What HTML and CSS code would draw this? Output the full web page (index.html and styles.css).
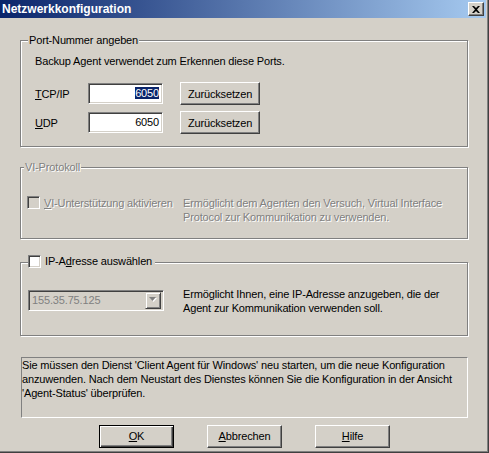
FILE: index.html
```html
<!DOCTYPE html>
<html lang="de">
  <head>
    <meta charset="UTF-8" />
    <title>Netzwerkkonfiguration</title>
    <link rel="stylesheet" href="styles.css">
  </head>
  <body>
    <div class="window">
      <div class="frame">
        <div class="titlebar">
          <span class="title">Netzwerkkonfiguration</span>
          <span class="close">
            <svg width="8" height="7" viewBox="0 0 8 7">
              <path d="M0 0h2l2 2 2-2h2L5 3.5 8 7H6L4 5 2 7H0l3-3.5z" fill="#000" />
            </svg>
          </span>
        </div>

        <div class="body">
          <!-- Ports -->
          <fieldset class="group group-ports">
            <legend>Port-Nummer angeben</legend>
            <div class="group-body">
              <p class="intro">Backup Agent verwendet zum Erkennen diese Ports.</p>
              <div class="port-row">
                <span class="port-label"><u>T</u>CP/IP</span>
                <div class="field"><span class="sel">6050</span></div>
                <button class="btn btn-reset">Zurücksetzen</button>
              </div>
              <div class="port-row port-row-2">
                <span class="port-label"><u>U</u>DP</span>
                <div class="field">6050</div>
                <button class="btn btn-reset">Zurücksetzen</button>
              </div>
            </div>
          </fieldset>

          <!-- VI -->
          <fieldset class="group group-vi">
            <legend class="disabled">VI-Protokoll</legend>
            <div class="group-body opt-row">
              <span class="check check-disabled"></span>
              <span class="opt-label disabled"><u>V</u>I-Unterstützung aktivieren</span>
              <span class="desc disabled">Ermöglicht dem Agenten den Versuch, Virtual Interface<br>Protocol zur Kommunikation zu verwenden.</span>
            </div>
          </fieldset>

          <!-- IP -->
          <fieldset class="group group-ip">
            <legend>
              <span class="legend-check">
                <span class="check"></span>
                <span class="legend-text">IP-A<u>d</u>resse auswählen</span>
              </span>
            </legend>
            <div class="group-body ip-row">
              <div class="combo">
                <span class="combo-value">155.35.75.125</span>
                <span class="combo-arrow">
                  <svg width="8" height="6" viewBox="0 0 8 6">
                    <path d="M1 1h7L4.5 5z" fill="#fff" />
                    <path d="M0 0h7L3.5 4z" fill="#808080" />
                  </svg>
                </span>
              </div>
              <span class="desc ip-desc">Ermöglicht Ihnen, eine IP-Adresse anzugeben, die der<br>Agent zur Kommunikation verwenden soll.</span>
            </div>
          </fieldset>

          <div class="info">Sie müssen den Dienst 'Client Agent für Windows' neu starten, um die neue Konfiguration<br>anzuwenden. Nach dem Neustart des Dienstes können Sie die Konfiguration in der Ansicht<br>'Agent-Status' überprüfen.</div>

          <div class="actions">
            <button class="btn btn-action btn-default"><u>O</u>K</button>
            <button class="btn btn-action"><u>A</u>bbrechen</button>
            <button class="btn btn-action"><u>H</u>ilfe</button>
          </div>
        </div>
      </div>
    </div>
  </body>
</html>
```

FILE: styles.css
```css
* {
  margin: 0;
  padding: 0;
  box-sizing: border-box;
}
body {
  font-family: "Liberation Sans", Arial, sans-serif;
  font-size: 11px;
  line-height: 14px;
  letter-spacing: -0.15px;
  color: #000;
  background: #d4d0c8;
}
.window {
  width: 489px;
  height: 453px;
  background: #d4d0c8;
  border-right: 1px solid #404040;
  border-bottom: 1px solid #404040;
}
.frame {
  height: 100%;
  border-right: 1px solid #808080;
  border-bottom: 1px solid #808080;
  padding-right: 1px;
  padding-bottom: 1px;
}
.titlebar {
  height: 18px;
  display: flex;
  align-items: center;
  justify-content: space-between;
  padding: 0 2px;
  background: linear-gradient(to right, #0a246a, #a6caf0);
}
.title {
  color: #fff;
  font-weight: bold;
  font-size: 12px;
  letter-spacing: 0;
  line-height: 18px;
}
.close {
  width: 16px;
  height: 14px;
  display: flex;
  align-items: center;
  justify-content: center;
  background: #d4d0c8;
  border: 1px solid;
  border-color: #fff #404040 #404040 #fff;
  box-shadow: inset -1px -1px #808080;
}
.body {
  padding: 0 18px 0 20px;
}
.disabled {
  color: #808080;
  text-shadow: 1px 1px 0 #fff;
}

/* group boxes */
.group {
  margin: 0;
  padding: 0;
  min-width: 0;
  border: 1px solid #808080;
  box-shadow: inset 1px 1px 0 #fff, 1px 1px 0 #fff;
}
.group legend {
  background: #d4d0c8;
  line-height: 14px;
  margin-left: 7px;
  padding: 0 1px;
}
.group-ports {
  margin-top: 15px;
}
.group-ports .group-body {
  padding: 7px 0 12px 14px;
}
.group-vi {
  margin-top: 13px;
}
.group-vi legend {
  margin-left: 3px;
}
.group-vi .group-body {
  padding: 22px 0 14px 6px;
}
.group-ip {
  margin-top: 15px;
}
.group-ip legend {
  padding: 0 3px 0 0;
}
.group-ip .group-body {
  padding: 16px 0 20px 7px;
}
.legend-check {
  display: inline-flex;
  align-items: center;
}
.legend-text {
  margin-left: 4px;
}

/* ports */
.intro {
  white-space: nowrap;
}
.port-row {
  display: flex;
  align-items: center;
  margin-top: 14px;
  height: 23px;
}
.port-row-2 {
  margin-top: 6px;
}
.port-label {
  width: 53px;
}
.field {
  width: 75px;
  height: 21px;
  background: #fff;
  border: 1px solid;
  border-color: #808080 #fff #fff #808080;
  box-shadow: inset 1px 1px #404040, inset -1px -1px #d4d0c8;
  text-align: right;
  padding: 0 3px;
  line-height: 19px;
}
.sel {
  background: #0a246a;
  color: #fff;
}

/* buttons */
.btn {
  font-family: "Liberation Sans", Arial, sans-serif;
  font-size: 11px;
  letter-spacing: -0.15px;
  color: #000;
  background: #d4d0c8;
  border: 1px solid;
  border-color: #fff #404040 #404040 #fff;
  box-shadow: inset -1px -1px #808080;
  height: 23px;
}
.btn-reset {
  width: 80px;
  margin-left: 17px;
}
.btn-action {
  width: 75px;
}
.btn-default {
  border-color: #000;
  box-shadow: inset 1px 1px #fff, inset -1px -1px #404040, inset -2px -2px #808080;
}

/* checkbox */
.check {
  display: inline-block;
  flex: none;
  width: 13px;
  height: 13px;
  background: #fff;
  border: 1px solid;
  border-color: #808080 #fff #fff #808080;
  box-shadow: inset 1px 1px #404040, inset -1px -1px #d4d0c8;
}
.check-disabled {
  background: #d4d0c8;
}
.opt-row {
  display: flex;
  align-items: flex-start;
}
.opt-label {
  width: 139px;
  margin-left: 4px;
  white-space: nowrap;
}
.desc {
  white-space: nowrap;
}

/* ip */
.ip-row {
  display: flex;
  align-items: flex-start;
}
.combo {
  width: 136px;
  height: 21px;
  margin-top: 3px;
  display: flex;
  align-items: center;
  padding: 2px;
  color: #808080;
  background: #d4d0c8;
  border: 1px solid;
  border-color: #808080 #fff #fff #808080;
  box-shadow: inset 1px 1px #404040, inset -1px -1px #d4d0c8;
}
.combo-value {
  padding-left: 1px;
}
.combo-arrow {
  width: 16px;
  height: 17px;
  margin-left: auto;
  display: flex;
  align-items: center;
  justify-content: center;
  border: 1px solid;
  border-color: #d4d0c8 #404040 #404040 #d4d0c8;
  box-shadow: inset 1px 1px #fff, inset -1px -1px #808080;
}
.ip-desc {
  margin-left: 19px;
}

/* info text */
.info {
  margin: 21px 0 0 1px;
  width: 447px;
  height: 61px;
  border: 1px solid;
  border-color: #808080 #fff #fff #808080;
  white-space: nowrap;
}
.actions {
  display: flex;
  gap: 33px;
  margin-top: 7px;
  padding-left: 79px;
}
```
